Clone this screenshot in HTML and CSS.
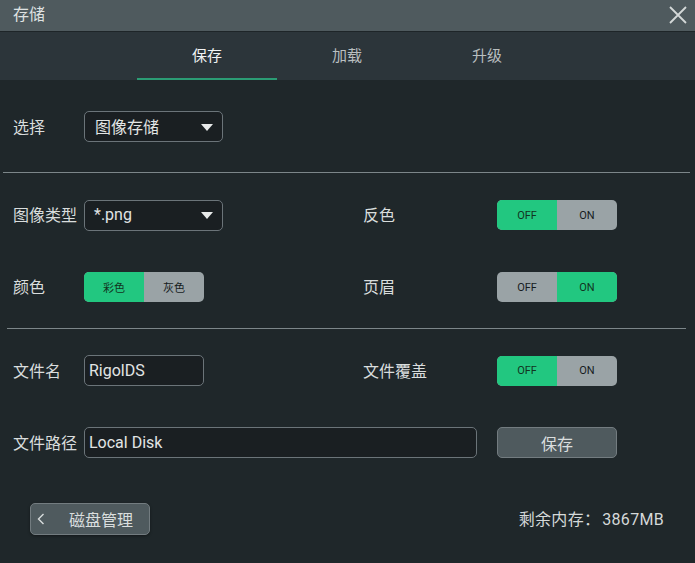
FILE: index.html
```html
<!DOCTYPE html>
<html lang="zh">
<head>
<meta charset="utf-8">
<link rel="stylesheet" href="styles.css">
</head>
<body>
<div class="win">
  <div class="titlebar">
    <span class="title">存储</span>
    <svg class="close" width="20" height="20" viewBox="0 0 20 20"><path d="M2 2 L18 18 M18 2 L2 18" stroke="#d4d8d8" stroke-width="1.8" fill="none"/></svg>
  </div>
  <div class="tabs">
    <div class="tab active">保存</div>
    <div class="tab">加载</div>
    <div class="tab">升级</div>
  </div>

  <div class="sec sec1">
    <div class="row h31">
      <div class="lab">选择</div>
      <div class="dd"><span>图像存储</span><i class="tri"></i></div>
    </div>
  </div>
  <div class="hr hr1"></div>

  <div class="sec sec2">
    <div class="row h30">
      <div class="lab">图像类型</div>
      <div class="cell"><div class="dd"><span>*.png</span><i class="tri"></i></div></div>
      <div class="lab rlab">反色</div>
      <div class="seg"><span class="on">OFF</span><span>ON</span></div>
    </div>
    <div class="row h30 gap42">
      <div class="lab">颜色</div>
      <div class="cell"><div class="seg small"><span class="on">彩色</span><span>灰色</span></div></div>
      <div class="lab rlab">页眉</div>
      <div class="seg"><span>OFF</span><span class="on">ON</span></div>
    </div>
  </div>
  <div class="hr hr2"></div>

  <div class="sec sec3">
    <div class="row h31">
      <div class="lab">文件名</div>
      <div class="cell"><div class="inp short">RigolDS</div></div>
      <div class="lab rlab">文件覆盖</div>
      <div class="seg"><span class="on">OFF</span><span>ON</span></div>
    </div>
    <div class="row h31 gap41">
      <div class="lab">文件路径</div>
      <div class="inp long">Local Disk</div>
      <div class="btn save">保存</div>
    </div>
  </div>

  <div class="footer">
    <div class="btn disk"><svg class="chev" width="8" height="12" viewBox="0 0 8 12"><path d="M6.5 1 L1.5 6 L6.5 11" stroke="#d8dcdc" stroke-width="1.4" fill="none"/></svg><span>磁盘管理</span></div>
    <div class="mem">剩余内存<span class="colon">：</span>3867MB</div>
  </div>
</div>
</body>
</html>
```
FILE: styles.css
```css
html, body {
  margin: 0;
  padding: 0;
  background: #1f272a;
}
body {
  font-family: Roboto, "Noto Sans CJK SC", sans-serif;
  color: #d9dddd;
  font-size: 16px;
}
.win {
  width: 695px;
  height: 563px;
  overflow: hidden;
  background: #1f272a;
  display: flex;
  flex-direction: column;
}
.titlebar {
  height: 31px;
  background: #4f5a5e;
  border-bottom: 1px solid #1e2528;
  display: flex;
  align-items: center;
  justify-content: space-between;
  padding: 0 7px 0 13px;
  flex: none;
}
.title {
  font-size: 16px;
  color: #dfe2e2;
  line-height: 1;
  margin-top: -2px;
}
.close { display: block; margin-top: -1px; }
.tabs {
  height: 48px;
  background: #2c353a;
  display: flex;
  padding-left: 137px;
  flex: none;
}
.tab {
  width: 140px;
  display: flex;
  align-items: center;
  justify-content: center;
  font-size: 15px;
  color: #b9bfc0;
  box-sizing: border-box;
  border-bottom: 2px solid transparent;
  padding-bottom: 1px;
}
.tab.active {
  color: #f2f4f4;
  border-bottom-color: #2b9c74;
}
.sec { flex: none; padding-left: 13px; }
.sec1 { padding-top: 31px; padding-bottom: 30px; }
.sec2 { padding-top: 27px; padding-bottom: 26px; }
.sec3 { padding-top: 26px; }
.hr { height: 1px; background: #7c8689; flex: none; }
.hr1 { margin: 0 5px 0 3px; }
.hr2 { margin: 0 9px 0 7px; }
.row { display: flex; align-items: center; }
.h31 { height: 31px; }
.h30 { height: 30px; }
.gap42 { margin-top: 42px; }
.gap41 { margin-top: 41px; }
.lab {
  width: 71px;
  flex: none;
  font-size: 16px;
  color: #d9dddd;
  white-space: nowrap;
  margin-top: -2px;
}
.rlab { width: 134px; }
.cell { width: 279px; flex: none; display: flex; align-items: center; height: 100%; }
.dd {
  width: 139px;
  height: 31px;
  box-sizing: border-box;
  border: 1px solid #6b7479;
  border-radius: 5px;
  background: #1a1f22;
  display: flex;
  align-items: center;
  justify-content: space-between;
  padding: 0 9px 0 9px;
  font-size: 16px;
  color: #e2e5e5;
}
.dd span { margin-top: -1px; }
.sec1 .dd { padding-left: 10px; }
.tri {
  width: 0;
  height: 0;
  border-left: 6px solid transparent;
  border-right: 6px solid transparent;
  border-top: 7px solid #e8eaea;
  margin-top: 1px;
}
.seg {
  width: 120px;
  height: 30px;
  border-radius: 5px;
  overflow: hidden;
  display: flex;
  flex: none;
  background: #9aa3a6;
}
.seg span {
  flex: 1;
  display: flex;
  align-items: center;
  justify-content: center;
  font-size: 11px;
  color: #161c1d;
}
.seg span.on { background: #22c780; color: #123421; }
.seg.small span { font-size: 11px; }
.inp {
  height: 31px;
  box-sizing: border-box;
  border: 1px solid #6b7479;
  border-radius: 5px;
  background: #1a1f22;
  display: flex;
  align-items: center;
  padding-left: 4px;
  font-size: 16px;
  color: #e2e5e5;
  flex: none;
}
.inp.short { width: 120px; }
.inp.long { width: 393px; }
.btn {
  background: #4f5a5e;
  border: 1px solid #737c80;
  border-radius: 5px;
  box-sizing: border-box;
  color: #dadede;
  font-size: 16px;
  display: flex;
  align-items: center;
  flex: none;
}
.save {
  width: 120px;
  height: 31px;
  margin-left: 20px;
  justify-content: center;
}
.footer {
  display: flex;
  align-items: center;
  justify-content: space-between;
  margin-top: 45px;
  padding: 0 31px 0 30px;
  height: 32px;
  flex: none;
}
.disk {
  width: 120px;
  height: 32px;
  padding-left: 6px;
  box-shadow: 0 1px 3px rgba(0,0,0,0.4);
}
.chev { display: block; }
.disk span { margin-left: 24px; margin-top: -1px; }
.mem { font-size: 16px; color: #d5d9d9; letter-spacing: 0.3px; margin-top: -2px; }
.colon { margin-right: 2px; }
```
